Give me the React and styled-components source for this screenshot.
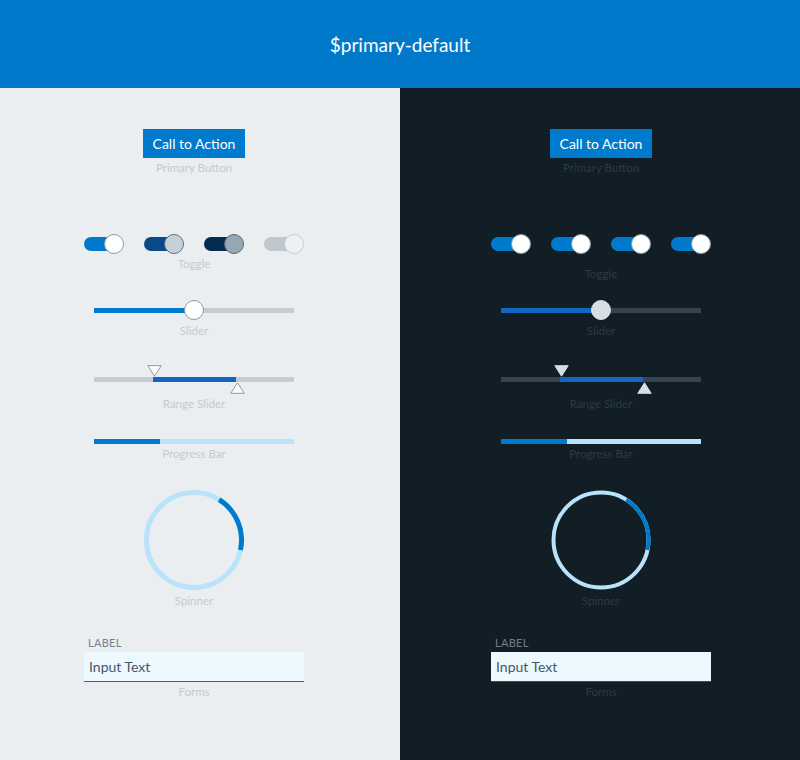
import styled, { createGlobalStyle } from "styled-components";

const GlobalStyles = createGlobalStyle`
  html, body {
    margin: 0;
    padding: 0;
    background: #ebeef1;
  }
  body {
    font-family: "Lato", "Open Sans", sans-serif;
  }
`;

const themes = {
  light: {
    bg: "#ebeef1",
    caption: "#c2cad1",
    label: "#74828e",
    offThumb: "#ffffff",
    thumbBorder: "#8d9ba6",
    sliderFill: "#007acc",
    sliderRest: "#c5cdd3",
    rangeRest: "#c5cdd3",
    rangeFill: "#1565c0",
    triFill: "#ffffff",
    triStroke: "#8d9ba6",
    spinTrack: "#b9e3fa",
    spinWidth: 5,
    inputBorder: "#1a6ab5",
  },
  dark: {
    bg: "#121e26",
    caption: "#2b3a44",
    label: "#6f808c",
    offThumb: "#d7dee4",
    thumbBorder: "#d7dee4",
    sliderFill: "#1366c2",
    sliderRest: "#354450",
    rangeRest: "#354450",
    rangeFill: "#1366c2",
    triFill: "#d7dee4",
    triStroke: "#d7dee4",
    spinTrack: "#b9e3fa",
    spinWidth: 4,
    inputBorder: "#0c5a98",
  },
};

const Page = styled.div`
  width: 800px;
  min-height: 760px;
`;

const Header = styled.header`
  height: 88px;
  background: #0079cb;
  color: #ffffff;
  display: flex;
  align-items: center;
  justify-content: center;
  font-size: 19px;
`;

const Panels = styled.div`
  display: grid;
  grid-template-columns: 400px 400px;
  height: 672px;
`;

const Panel = styled.section`
  background: ${(p) => p.$t.bg};
  padding-left: ${(p) => p.$offset}px;
  padding-top: 41px;
  display: flex;
  flex-direction: column;
  box-sizing: border-box;
`;

const Block = styled.div`
  width: 220px;
  display: flex;
  flex-direction: column;
  align-items: center;
  margin-top: ${(p) => p.$mt || 0}px;
`;

const Caption = styled.div`
  font-size: 11.5px;
  line-height: 14px;
  color: ${(p) => p.$t.caption};
  margin-top: ${(p) => p.$mt ?? 4}px;
`;

const PrimaryButton = styled.button`
  height: 29px;
  padding: 0 10px;
  border: none;
  background: #007acc;
  color: #ffffff;
  font-family: inherit;
  font-size: 14px;
`;

const ToggleRow = styled.div`
  width: 220px;
  display: flex;
  justify-content: space-between;
`;

const ToggleWrap = styled.div`
  position: relative;
  width: 40px;
  height: 20px;
`;

const Track = styled.div`
  position: absolute;
  left: 0;
  top: 3px;
  width: 34px;
  height: 14px;
  border-radius: 7px;
  background: ${(p) => p.$color};
`;

const Thumb = styled.div`
  position: absolute;
  right: 0;
  top: 0;
  width: 20px;
  height: 20px;
  box-sizing: border-box;
  border-radius: 50%;
  background: ${(p) => p.$color};
  border: 1px solid ${(p) => p.$border};
`;

const Toggle = ({ track, thumb, border }) => (
  <ToggleWrap>
    <Track $color={track} />
    <Thumb $color={thumb} $border={border} />
  </ToggleWrap>
);

const SliderWrap = styled.div`
  position: relative;
  width: 200px;
  height: 20px;
  display: flex;
  align-items: center;
`;

const Bar = styled.div`
  width: 200px;
  height: ${(p) => p.$h || 5}px;
  display: flex;
`;

const Fill = styled.div`
  height: 100%;
  background: ${(p) => p.$color};
  flex: ${(p) => p.$grow} 0 0;
`;

const SliderThumb = styled.div`
  position: absolute;
  left: 90px;
  top: 0;
  width: 20px;
  height: 20px;
  box-sizing: border-box;
  border-radius: 50%;
  background: ${(p) => p.$t.offThumb};
  border: 1px solid ${(p) => p.$t.thumbBorder};
`;

const RangeWrap = styled.div`
  position: relative;
  width: 200px;
  height: 29px;
  display: flex;
  align-items: center;
`;

const Tri = styled.svg`
  position: absolute;
  left: ${(p) => p.$x - 7}px;
  top: ${(p) => (p.$up ? 17 : 0)}px;
`;

const Triangle = ({ t, x, up }) => (
  <Tri $x={x} $up={up} width="15" height="12" viewBox="0 0 15 12">
    <polygon
      points={up ? "7.5,0.8 14.2,11.3 0.8,11.3" : "0.8,0.7 14.2,0.7 7.5,11.2"}
      fill={t.triFill}
      stroke={t.triStroke}
      strokeWidth="1"
    />
  </Tri>
);

const SpinnerSvg = styled.svg`
  display: block;
`;

const Spinner = ({ t }) => {
  const r = 47.5;
  const c = 2 * Math.PI * r;
  const arc = (70 / 360) * c;
  return (
    <SpinnerSvg width="100" height="100" viewBox="0 0 100 100">
      <circle cx="50" cy="50" r={r} fill="none" stroke={t.spinTrack} strokeWidth={t.spinWidth} />
      <circle
        cx="50"
        cy="50"
        r={r}
        fill="none"
        stroke="#007acc"
        strokeWidth={t.spinWidth}
        strokeDasharray={`${arc} ${c}`}
        transform="rotate(-58 50 50)"
      />
    </SpinnerSvg>
  );
};

const FieldLabel = styled.div`
  align-self: flex-start;
  padding-left: 4px;
  font-size: 11px;
  line-height: 14px;
  letter-spacing: 0.3px;
  color: ${(p) => p.$t.label};
`;

const Input = styled.div`
  margin-top: 2px;
  width: 220px;
  height: 30px;
  box-sizing: border-box;
  padding-left: 5px;
  display: flex;
  align-items: center;
  background: #edf9fe;
  border-bottom: 1px solid ${(p) => p.$t.inputBorder};
  color: #44576a;
  font-size: 14px;
`;

const lightToggles = [
  { track: "#007acc", thumb: "#ffffff", border: "#8d9ba6" },
  { track: "#0b4a89", thumb: "#c5d0d8", border: "#5b7082" },
  { track: "#042c51", thumb: "#98a8b3", border: "#56687a" },
  { track: "#bec8ce", thumb: "#eef1f3", border: "#c6cdd2" },
];

const darkToggles = [0, 1, 2, 3].map(() => ({
  track: "#007acc",
  thumb: "#ffffff",
  border: "#8d9ba6",
}));

const Showcase = ({ t, offset, toggles, toggleGap }) => (
  <Panel $t={t} $offset={offset}>
    <Block>
      <PrimaryButton>Call to Action</PrimaryButton>
      <Caption $t={t} $mt={3}>Primary Button</Caption>
    </Block>

    <Block $mt={59}>
      <ToggleRow>
        {toggles.map((tg, i) => (
          <Toggle key={i} {...tg} />
        ))}
      </ToggleRow>
      <Caption $t={t} $mt={toggleGap}>Toggle</Caption>
    </Block>

    <Block $mt={29 - (toggleGap - 3)}>
      <SliderWrap>
        <Bar>
          <Fill $color={t.sliderFill} $grow={1} />
          <Fill $color={t.sliderRest} $grow={1} />
        </Bar>
        <SliderThumb $t={t} />
      </SliderWrap>
      <Caption $t={t}>Slider</Caption>
    </Block>

    <Block $mt={27}>
      <RangeWrap>
        <Bar>
          <Fill $color={t.rangeRest} $grow={59} />
          <Fill $color={t.rangeFill} $grow={83} />
          <Fill $color={t.rangeRest} $grow={58} />
        </Bar>
        <Triangle t={t} x={59.5} />
        <Triangle t={t} x={142.5} up />
      </RangeWrap>
      <Caption $t={t} $mt={3}>Range Slider</Caption>
    </Block>

    <Block $mt={28}>
      <Bar>
        <Fill $color="#007acc" $grow={66} />
        <Fill $color="#b9e3fa" $grow={134} />
      </Bar>
      <Caption $t={t} $mt={3}>Progress Bar</Caption>
    </Block>

    <Block $mt={29}>
      <Spinner t={t} />
      <Caption $t={t}>Spinner</Caption>
    </Block>

    <Block $mt={28}>
      <FieldLabel $t={t}>LABEL</FieldLabel>
      <Input $t={t}>Input Text</Input>
      <Caption $t={t} $mt={3}>Forms</Caption>
    </Block>
  </Panel>
);

export default function App() {
  return (
    <Page>
      <GlobalStyles />
      <Header>$primary-default</Header>
      <Panels>
        <Showcase t={themes.light} offset={84} toggles={lightToggles} toggleGap={3} />
        <Showcase t={themes.dark} offset={91} toggles={darkToggles} toggleGap={13} />
      </Panels>
    </Page>
  );
}
